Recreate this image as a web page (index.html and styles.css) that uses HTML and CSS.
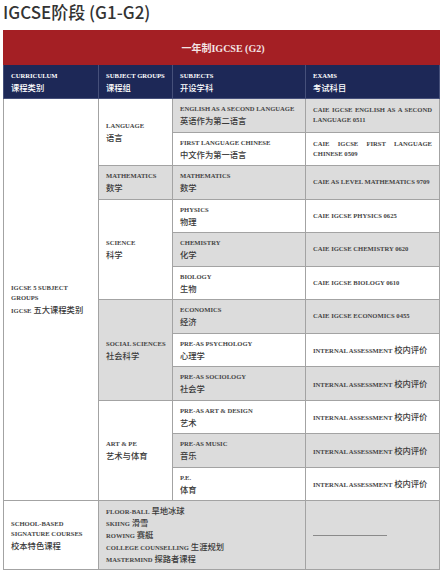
FILE: index.html
```html
<!DOCTYPE html>
<html lang="zh">
<head>
<meta charset="utf-8">
<title>IGCSE阶段 (G1-G2)</title>
<link rel="stylesheet" href="styles.css">
</head>
<body>
<div class="page">
  <h1 class="title">IGCSE阶段 (G1-G2)</h1>
  <table class="grid">
    <colgroup>
      <col class="c1"><col class="c2"><col class="c3"><col class="c4">
    </colgroup>
    <thead>
      <tr class="banner"><th colspan="4">一年制IGCSE (G2)</th></tr>
      <tr class="heads">
        <th><span class="en">CURRICULUM</span><span class="zh">课程类别</span></th>
        <th><span class="en">SUBJECT GROUPS</span><span class="zh">课程组</span></th>
        <th><span class="en">SUBJECTS</span><span class="zh">开设学科</span></th>
        <th><span class="en">EXAMS</span><span class="zh">考试科目</span></th>
      </tr>
    </thead>
    <tbody>
      <tr class="row">
        <td rowspan="12" class="white"><span class="en">IGCSE 5 SUBJECT GROUPS</span><span class="mix"><span class="en in">IGCSE</span> 五大课程类别</span></td>
        <td rowspan="2" class="white"><span class="en">LANGUAGE</span><span class="zh">语言</span></td>
        <td class="grey"><span class="en">ENGLISH AS A SECOND LANGUAGE</span><span class="zh">英语作为第二语言</span></td>
        <td class="grey exam"><span class="en">CAIE IGCSE ENGLISH AS A SECOND LANGUAGE 0511</span></td>
      </tr>
      <tr class="row">
        <td class="white"><span class="en">FIRST LANGUAGE CHINESE</span><span class="zh">中文作为第一语言</span></td>
        <td class="white exam"><span class="en">CAIE IGCSE FIRST LANGUAGE CHINESE 0509</span></td>
      </tr>
      <tr class="row">
        <td class="grey"><span class="en">MATHEMATICS</span><span class="zh">数学</span></td>
        <td class="grey"><span class="en">MATHEMATICS</span><span class="zh">数学</span></td>
        <td class="grey exam"><span class="en">CAIE AS LEVEL MATHEMATICS 9709</span></td>
      </tr>
      <tr class="row">
        <td rowspan="3" class="white"><span class="en">SCIENCE</span><span class="zh">科学</span></td>
        <td class="white"><span class="en">PHYSICS</span><span class="zh">物理</span></td>
        <td class="white exam"><span class="en">CAIE IGCSE PHYSICS 0625</span></td>
      </tr>
      <tr class="row">
        <td class="grey"><span class="en">CHEMISTRY</span><span class="zh">化学</span></td>
        <td class="grey exam"><span class="en">CAIE IGCSE CHEMISTRY 0620</span></td>
      </tr>
      <tr class="row">
        <td class="white"><span class="en">BIOLOGY</span><span class="zh">生物</span></td>
        <td class="white exam"><span class="en">CAIE IGCSE BIOLOGY 0610</span></td>
      </tr>
      <tr class="row">
        <td rowspan="3" class="grey"><span class="en nowrap">SOCIAL SCIENCES</span><span class="zh">社会科学</span></td>
        <td class="grey"><span class="en">ECONOMICS</span><span class="zh">经济</span></td>
        <td class="grey exam"><span class="en">CAIE IGCSE ECONOMICS 0455</span></td>
      </tr>
      <tr class="row">
        <td class="white"><span class="en">PRE-AS PSYCHOLOGY</span><span class="zh">心理学</span></td>
        <td class="white exam"><span class="mix"><span class="en in">INTERNAL ASSESSMENT</span> 校内评价</span></td>
      </tr>
      <tr class="row">
        <td class="grey"><span class="en">PRE-AS SOCIOLOGY</span><span class="zh">社会学</span></td>
        <td class="grey exam"><span class="mix"><span class="en in">INTERNAL ASSESSMENT</span> 校内评价</span></td>
      </tr>
      <tr class="row">
        <td rowspan="3" class="white"><span class="en">ART &amp; PE</span><span class="zh">艺术与体育</span></td>
        <td class="white"><span class="en">PRE-AS ART &amp; DESIGN</span><span class="zh">艺术</span></td>
        <td class="white exam"><span class="mix"><span class="en in">INTERNAL ASSESSMENT</span> 校内评价</span></td>
      </tr>
      <tr class="row">
        <td class="grey"><span class="en">PRE-AS MUSIC</span><span class="zh">音乐</span></td>
        <td class="grey exam"><span class="mix"><span class="en in">INTERNAL ASSESSMENT</span> 校内评价</span></td>
      </tr>
      <tr class="row">
        <td class="white"><span class="en">P.E.</span><span class="zh">体育</span></td>
        <td class="white exam"><span class="mix"><span class="en in">INTERNAL ASSESSMENT</span> 校内评价</span></td>
      </tr>
      <tr class="last">
        <td class="white"><span class="en">SCHOOL-BASED SIGNATURE COURSES</span><span class="zh">校本特色课程</span></td>
        <td colspan="2" class="grey list">
          <span class="mix"><span class="en in">FLOOR-BALL</span> 旱地冰球</span>
          <span class="mix"><span class="en in">SKIING</span> 滑雪</span>
          <span class="mix"><span class="en in">ROWING</span> 赛艇</span>
          <span class="mix"><span class="en in">COLLEGE COUNSELLING</span> 生涯规划</span>
          <span class="mix"><span class="en in">MASTERMIND</span> 探路者课程</span>
        </td>
        <td class="grey"><span class="dash"></span></td>
      </tr>
    </tbody>
  </table>
</div>
</body>
</html>
```
FILE: styles.css
```css
html, body {
  margin: 0;
  padding: 0;
  background: #ffffff;
}

.page {
  padding: 0 3px;
  width: 437px;
}

.title {
  margin: 0;
  height: 30px;
  font-family: "Noto Sans CJK SC", "Noto Sans", sans-serif;
  font-size: 17px;
  font-weight: 500;
  line-height: 24px;
  color: #333333;
}

.grid {
  width: 436px;
  border-collapse: collapse;
  table-layout: fixed;
  font-family: "Liberation Serif", "Noto Sans CJK SC", serif;
}

.c1 { width: 95px; }
.c2 { width: 74px; }
.c3 { width: 133px; }
.c4 { width: 134px; }

.grid th,
.grid td {
  border: 1px solid #a3a3a3;
  padding: 0 4px 0 7px;
  text-align: left;
  vertical-align: middle;
  color: #3a3a3a;
}

.grid td.exam {
  padding: 0 7px 0 7px;
}

.banner th {
  height: 33px;
  background: #a41f24;
  border-color: #a41f24;
  text-align: center;
  color: #f3e4e4;
  font-size: 10px;
  font-weight: bold;
  font-family: "Liberation Serif", "Noto Sans CJK SC", serif;
}

.heads th {
  height: 33px;
  background: #1d2857;
  border-color: #46507a;
  color: #ffffff;
  font-weight: normal;
}

.heads th .en,
.heads th .zh {
  color: #ffffff;
}

.row td {
  height: 32.5px;
}

.last td {
  height: 68px;
}

.white { background: #ffffff; }
.grey { background: #dcdcdc; }

.en {
  display: block;
  font-family: "Liberation Serif", serif;
  font-size: 6.6px;
  font-weight: bold;
  line-height: 10px;
  color: #454545;
}

.nowrap {
  white-space: nowrap;
}

.zh {
  display: block;
  font-family: "Noto Sans CJK SC", sans-serif;
  font-size: 8.3px;
  font-weight: 500;
  line-height: 12px;
  color: #3a3a3a;
}

.mix {
  display: block;
  font-family: "Noto Sans CJK SC", sans-serif;
  font-size: 8.3px;
  font-weight: 500;
  line-height: 12px;
  color: #3a3a3a;
}

.en.in {
  display: inline;
}

.exam .en {
  text-align: justify;
}

.list .mix {
  line-height: 11.7px;
}

.dash {
  display: block;
  width: 74px;
  height: 1px;
  background: #8a8a8a;
}
```
